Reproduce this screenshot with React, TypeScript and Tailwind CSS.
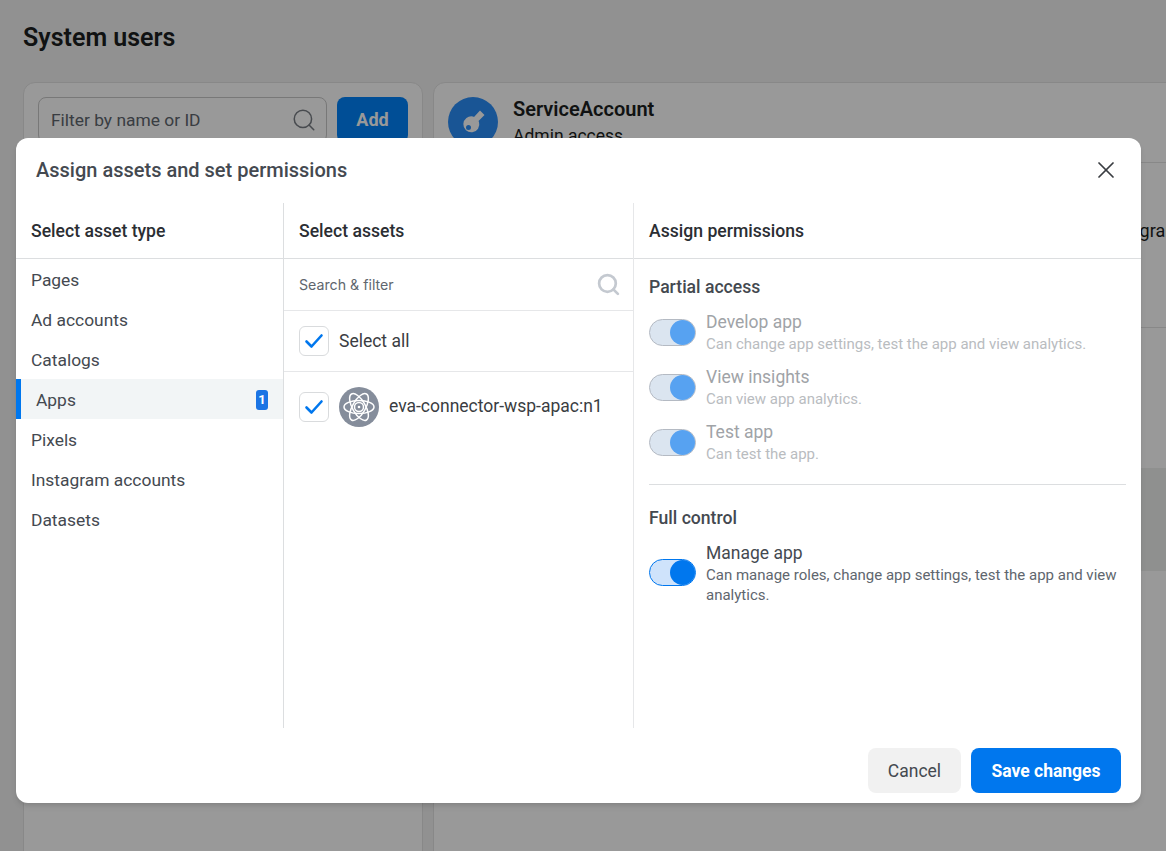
import React from 'react';
import { Search, X } from 'lucide-react';

const assetTypes = ['Pages', 'Ad accounts', 'Catalogs', 'Apps', 'Pixels', 'Instagram accounts', 'Datasets'];

const partialPermissions = [
  { title: 'Develop app', text: 'Can change app settings, test the app and view analytics.' },
  { title: 'View insights', text: 'Can view app analytics.' },
  { title: 'Test app', text: 'Can test the app.' },
];

function Toggle({ faded }: { faded?: boolean }) {
  return (
    <span
      className={
        faded
          ? 'flex h-[27px] w-[47px] shrink-0 items-center justify-end rounded-full border border-[#b4bac3] bg-[#dbe5f0]'
          : 'flex h-[27px] w-[47px] shrink-0 items-center justify-end rounded-full border border-[#0077ee] bg-[#cfe3fb]'
      }
    >
      <span className={faded ? 'h-[25px] w-[25px] rounded-full bg-[#57a2f1]' : 'h-[25px] w-[25px] rounded-full bg-[#0077ee]'} />
    </span>
  );
}

function Checkbox() {
  return (
    <span className="flex h-[30px] w-[30px] shrink-0 items-center justify-center rounded-md border border-[#d9dbdd] bg-white">
      <svg width="20" height="16" viewBox="0 0 20 16" fill="none">
        <path d="M2.5 8.5 L7.5 13.5 L17.5 2.5" stroke="#0077ee" strokeWidth="2.6" strokeLinecap="round" strokeLinejoin="round" />
      </svg>
    </span>
  );
}

function AtomAvatar() {
  return (
    <span className="flex h-10 w-10 shrink-0 items-center justify-center rounded-full bg-[#858d9b]">
      <svg width="34" height="34" viewBox="0 0 34 34" fill="none" stroke="#fff" strokeWidth="1.5">
        <ellipse cx="17" cy="17" rx="15" ry="6.5" />
        <ellipse cx="17" cy="17" rx="15" ry="6.5" transform="rotate(60 17 17)" />
        <ellipse cx="17" cy="17" rx="15" ry="6.5" transform="rotate(120 17 17)" />
        <circle cx="17" cy="17" r="4.5" />
        <circle cx="17" cy="17" r="1.3" fill="#fff" stroke="none" />
      </svg>
    </span>
  );
}

function KeyIcon() {
  return (
    <svg width="26" height="26" viewBox="0 0 26 26" fill="none">
      <path
        d="M20 1.5 L24.5 6 L18.5 12 L19 13 A8 8 0 1 1 13 7.5 L14 8 Z M8.5 16 A2.5 2.5 0 1 0 8.5 21 A2.5 2.5 0 1 0 8.5 16 Z"
        fill="#fff"
        fillRule="evenodd"
      />
    </svg>
  );
}

export default function App() {
  return (
    <div className="relative h-[851px] w-full overflow-hidden bg-[#f2f2f2] font-['Roboto',sans-serif] text-[#1c1e21]">
      {/* Page behind the dialog */}
      <div className="px-[23px]">
        <h1 className="flex h-[82px] items-start pt-[22px] text-[25px] leading-8 font-semibold">System users</h1>
        <div className="flex gap-2.5">
          <div className="h-[900px] w-[400px] shrink-0 rounded-xl border border-[#e3e3e3] bg-white p-[14px]">
            <div className="flex gap-2.5">
              <div className="flex h-[46px] w-[289px] items-center justify-between rounded-lg border border-[#c8c8c8] pr-[9px] pl-3 text-[17.4px] text-[#60666e]">
                Filter by name or ID
                <Search className="h-[26px] w-[26px] text-[#787d84]" strokeWidth={1.4} />
              </div>
              <div className="flex h-[46px] w-[71px] items-center justify-center rounded-lg bg-[#0082fa] text-lg font-bold text-white">Add</div>
            </div>
          </div>
          <div className="h-[900px] w-[760px] shrink-0 overflow-hidden rounded-xl border border-[#e3e3e3] bg-white">
            <div className="flex h-16 gap-[15px] px-[14px] pt-[14px]">
              <span className="flex h-[50px] w-[50px] items-center justify-center rounded-full bg-[#2b8ef8]">
                <KeyIcon />
              </span>
              <div>
                <div className="text-[20px] leading-[25px] font-semibold">ServiceAccount</div>
                <div className="mt-0.5 text-[17.5px] leading-[25px]">Admin access</div>
              </div>
            </div>
            <div className="mt-[15px] flex h-[166px] items-center justify-end border-y border-[#e3e3e3] pr-[11px] text-lg">
              <span className="relative -top-[14px]">Instagram</span>
            </div>
            <div className="mt-[140px] h-[103px] bg-[#eef1ef]" />
          </div>
        </div>
      </div>

      {/* Overlay */}
      <div className="absolute inset-0 bg-black/40" />

      {/* Dialog */}
      <div className="absolute top-[138px] left-4 flex h-[665px] w-[1125px] flex-col rounded-xl bg-white shadow-md">
        <div className="flex h-[65px] shrink-0 items-center justify-between pr-[21px] pb-0.5 pl-5">
          <h2 className="text-[20px] font-medium text-[#444950]">Assign assets and set permissions</h2>
          <X className="h-7 w-7 text-[#3a3d42]" strokeWidth={1.5} />
        </div>

        <div className="flex h-[525px] shrink-0">
          <div className="w-[268px] shrink-0 border-r border-[#dcdee0]">
            <div className="flex h-14 items-center border-b border-[#dcdee0] px-[15px] pt-0.5 text-[17.6px] font-medium text-[#2b2e33]">Select asset type</div>
            {assetTypes.map((type) =>
              type === 'Apps' ? (
                <div key={type} className="flex h-10 items-center justify-between border-l-[5px] border-[#0077ee] bg-[#f2f5f6] pt-0.5 pr-[15px] pl-[15px] text-[17.4px] text-[#444950]">
                  {type}
                  <span className="flex h-5 w-3 items-center justify-center rounded-[3px] bg-[#1b74e4] text-[13px] font-bold text-white">1</span>
                </div>
              ) : (
                <div key={type} className="flex h-10 items-center px-[15px] pt-0.5 text-[17.4px] text-[#444950]">
                  {type}
                </div>
              ),
            )}
          </div>

          <div className="w-[350px] shrink-0 border-r border-[#e6e7e9]">
            <div className="flex h-14 items-center border-b border-[#dcdee0] px-[15px] pt-0.5 text-[17.6px] font-medium text-[#2b2e33]">Select assets</div>
            <div className="flex h-[52px] items-center justify-between border-b border-[#e6e7e9] pr-3 pl-[15px] font-['Inter',sans-serif] text-[14.2px] text-[#60666e]">
              Search &amp; filter
              <Search className="h-[25px] w-[25px] text-[#c4c9d0]" strokeWidth={2.6} />
            </div>
            <div className="flex h-[61px] items-center gap-2.5 border-b border-[#e6e7e9] pl-[15px] text-[17.5px] text-[#3a3d42]">
              <Checkbox />
              Select all
            </div>
            <div className="flex h-[70px] items-center gap-2.5 pl-[15px] text-[17.5px] text-[#3a3d42]">
              <Checkbox />
              <AtomAvatar />
              <span className="pb-0.5">eva-connector-wsp-apac:n1</span>
            </div>
          </div>

          <div className="min-w-0 flex-1">
            <div className="flex h-14 items-center border-b border-[#dcdee0] px-[15px] pt-0.5 text-[17.6px] font-medium text-[#2b2e33]">Assign permissions</div>
            <div className="px-[15px]">
              <div className="pt-4 text-[17.6px] leading-6 font-medium text-[#444950]">Partial access</div>
              <div className="mt-2.5 flex flex-col gap-[9px] border-b border-[#dcdee0] pb-[19px]">
                {partialPermissions.map((perm) => (
                  <div key={perm.title} className="flex h-[46px] items-center gap-2.5">
                    <Toggle faded />
                    <div>
                      <div className="text-[17.5px] leading-6 text-[#a0a3a7]">{perm.title}</div>
                      <div className="text-[15px] leading-5 text-[#b9bcbf]">{perm.text}</div>
                    </div>
                  </div>
                ))}
              </div>
              <div className="pt-[21px] text-[17.6px] leading-6 font-medium text-[#444950]">Full control</div>
              <div className="mt-[11px] flex items-start gap-2.5">
                <span className="mt-[18px] shrink-0">
                  <Toggle />
                </span>
                <div>
                  <div className="text-[17.5px] leading-[24px] text-[#444950]">Manage app</div>
                  <div className="text-[15px] leading-5 text-[#60666e]">Can manage roles, change app settings, test the app and view analytics.</div>
                </div>
              </div>
            </div>
          </div>
        </div>

        <div className="flex flex-1 items-center justify-end gap-2.5 pt-[9px] pr-5">
          <button className="h-[45px] w-[93px] rounded-lg bg-[#f1f1f1] pt-0.5 text-[17.5px] text-[#444950]">Cancel</button>
          <button className="h-[45px] w-[150px] rounded-lg bg-[#0077ee] pt-0.5 text-[17.5px] font-bold text-white">Save changes</button>
        </div>
      </div>
    </div>
  );
}
